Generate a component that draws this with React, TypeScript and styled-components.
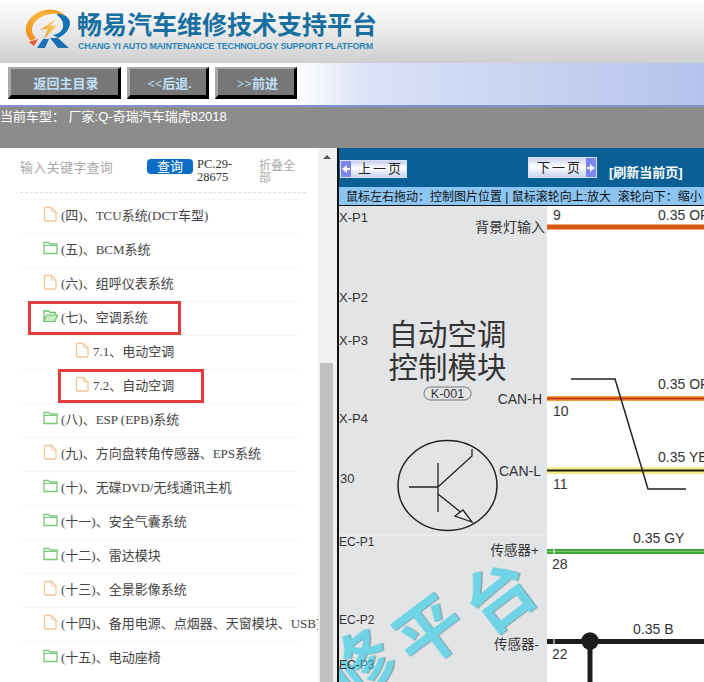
import React from "react";
import styled, { createGlobalStyle } from "styled-components";

const Global = createGlobalStyle`
  html, body {
    margin: 0;
    padding: 0;
    background: #fff;
  }
  body {
    width: 704px;
    height: 682px;
    overflow: hidden;
    font-family: "Liberation Sans", "Noto Sans CJK SC", sans-serif;
  }
`;

const Page = styled.div`
  width: 704px;
  height: 682px;
  display: flex;
  flex-direction: column;
  overflow: hidden;
`;

const Banner = styled.div`
  height: 63px;
  flex: none;
  display: flex;
  align-items: flex-start;
  gap: 6px;
  padding: 8px 0 0 25px;
  box-sizing: border-box;
  background: linear-gradient(#fdfdfd, #f4f4f4 30%, #cfcfcf);
`;

const BrandText = styled.div`
  display: flex;
  flex-direction: column;
  padding-top: 4px;
`;

const BrandTitle = styled.div`
  font-size: 25px;
  line-height: 26px;
  font-weight: 700;
  color: #17709f;
  white-space: nowrap;
`;

const BrandSub = styled.div`
  font-size: 9px;
  line-height: 11px;
  margin-top: 3px;
  margin-left: 1px;
  font-weight: 700;
  letter-spacing: -0.17px;
  color: #2a86b8;
  white-space: nowrap;
`;

const Toolbar = styled.div`
  height: 44px;
  flex: none;
  display: flex;
  align-items: flex-start;
  gap: 6px;
  padding: 4px 0 0 8px;
  box-sizing: border-box;
  background: linear-gradient(90deg, #fff 42%, #dbe2f7 52%, #b4c3ec);
  border-bottom: 2px solid #7d92cf;
`;

const NavButton = styled.button<{ $w: number }>`
  width: ${(p) => p.$w}px;
  height: 32px;
  padding: 0 0 0 3px;
  box-sizing: border-box;
  border-style: solid;
  border-width: 2px 3px 4px 3px;
  border-color: #a8a8a8 #000 #000 #a8a8a8;
  background: #777;
  color: #bfe0f7;
  font-family: "Liberation Serif", "Noto Sans CJK SC", serif;
  font-size: 13px;
  font-weight: 700;
`;

const ModelBar = styled.div`
  height: 41px;
  flex: none;
  background: #8c8c8c;
  color: #fff;
  font-size: 13px;
  line-height: 19px;
`;

const Body = styled.div`
  flex: 1;
  min-height: 0;
  display: flex;
`;

const Sidebar = styled.div`
  width: 337px;
  flex: none;
  display: flex;
  background: #fff;
  overflow: hidden;
`;

const SideContent = styled.div`
  width: 318px;
  flex: none;
  overflow: hidden;
`;

const SearchRow = styled.div`
  width: 286px;
  height: 45px;
  margin-left: 20px;
  display: flex;
  align-items: flex-start;
  box-sizing: border-box;
  padding-top: 10px;
  border-bottom: 1px dashed #ddd;
`;

const SearchHint = styled.div`
  width: 127px;
  flex: none;
  padding-top: 2px;
  font-size: 13px;
  line-height: 16px;
  letter-spacing: 0.3px;
  color: #aaa;
`;

const SearchButton = styled.div`
  width: 46px;
  height: 15px;
  margin-top: 1px;
  flex: none;
  border-radius: 4px;
  background: #0a6cc4;
  color: #fff;
  font-size: 13px;
  line-height: 15px;
  text-align: center;
`;

const CodeText = styled.div`
  width: 62px;
  flex: none;
  margin-left: 4px;
  font-family: "Liberation Serif", serif;
  font-size: 12.5px;
  line-height: 13px;
  color: #333;
`;

const CollapseText = styled.div`
  width: 37px;
  flex: none;
  margin-top: 2px;
  font-size: 12px;
  line-height: 12px;
  color: #aaa;
`;

const TreeList = styled.div`
  display: flex;
  flex-direction: column;
  margin-top: 6px;
`;

const Row = styled.div<{ $indent: number }>`
  position: relative;
  height: 34px;
  width: 279px;
  margin-left: 20px;
  box-sizing: border-box;
  display: flex;
  align-items: center;
  gap: 3px;
  padding: 0 0 5px ${(p) => p.$indent}px;
  border-top: 1px solid #f5f5f5;
  font-family: "Liberation Serif", "Noto Sans CJK SC", serif;
  font-size: 13px;
  color: #444;
  white-space: nowrap;
`;

const RedBox = styled.div<{ $left: number; $w: number }>`
  position: absolute;
  left: ${(p) => p.$left}px;
  top: -1px;
  width: ${(p) => p.$w}px;
  height: 34px;
  box-sizing: border-box;
  border: 3px solid #e23d3d;
`;

const Scrollbar = styled.div`
  width: 17px;
  flex: none;
  background: #f1f1f1;
  display: flex;
  flex-direction: column;
  align-items: center;
`;

const ScrollArrow = styled.div`
  width: 0;
  height: 0;
  margin-top: 7px;
  border-left: 4px solid transparent;
  border-right: 4px solid transparent;
  border-bottom: 4px solid #555;
`;

const ScrollThumb = styled.div`
  width: 13px;
  flex: 1;
  margin-top: 204px;
  background: #c1c1c1;
`;

const ScrollGutter = styled.div`
  width: 2px;
  flex: none;
  background: #f1f1f1;
`;

const Viewer = styled.div`
  flex: 1;
  min-width: 0;
  display: flex;
  flex-direction: column;
  border-left: 2px solid #111;
  overflow: hidden;
`;

const PageBar = styled.div`
  height: 39px;
  flex: none;
  display: flex;
  align-items: flex-start;
  background: #0a5f96;
  white-space: nowrap;
`;

const PageButton = styled.div<{ $ml: number; $mt: number; $w: number; $h: number; $rev?: boolean }>`
  width: ${(p) => p.$w}px;
  height: ${(p) => p.$h}px;
  margin: ${(p) => p.$mt}px 0 0 ${(p) => p.$ml}px;
  flex: none;
  box-sizing: border-box;
  display: flex;
  flex-direction: ${(p) => (p.$rev ? "row-reverse" : "row")};
  align-items: center;
  border: 1px solid #d9e2f7;
  background: linear-gradient(#c7d0f0, #fff 45%, #c9d3f2);
  font-size: 13px;
  color: #222;
`;

const PageArrow = styled.div`
  width: 10px;
  align-self: stretch;
  flex: none;
  display: flex;
  align-items: center;
  justify-content: center;
  background: #7a86ee;
`;

const PageLabel = styled.div`
  flex: 1;
  padding: 0 0 3px 4px;
  text-align: center;
  letter-spacing: 2px;
`;

const RefreshLink = styled.div`
  margin: 17px 0 0 12px;
  font-size: 13px;
  line-height: 16px;
  font-weight: 700;
  color: #fff;
`;

const HelpBar = styled.div`
  height: 19px;
  flex: none;
  box-sizing: border-box;
  padding: 1px 0 0 7px;
  background: #8cc5f2;
  border-bottom: 1px solid #111;
  font-size: 12px;
  line-height: 18px;
  color: #111;
  white-space: nowrap;
`;

const Sheet = styled.div`
  flex: 1;
  min-height: 0;
  overflow: hidden;
`;

const DiagramSvg = styled.svg`
  display: block;
  font-family: "Liberation Sans", "Noto Sans CJK SC", sans-serif;
`;

const WatermarkText = styled.text`
  font-size: 68px;
  font-weight: 700;
  fill: #6fd4e6;
  text-anchor: middle;
  filter: drop-shadow(1.5px 1.5px 0 #8b9ea3);
`;

const tree: { label: string; kind: "file" | "folder" | "open"; indent: number; box?: [number, number] }[] = [
  { label: "(四)、TCU系统(DCT车型)", kind: "file", indent: 23 },
  { label: "(五)、BCM系统", kind: "folder", indent: 23 },
  { label: "(六)、组呼仪表系统", kind: "file", indent: 23 },
  { label: "(七)、空调系统", kind: "open", indent: 23, box: [8, 153] },
  { label: "7.1、电动空调", kind: "file", indent: 55 },
  { label: "7.2、自动空调", kind: "file", indent: 55, box: [38, 146] },
  { label: "(八)、ESP (EPB)系统", kind: "folder", indent: 23 },
  { label: "(九)、方向盘转角传感器、EPS系统", kind: "file", indent: 23 },
  { label: "(十)、无碟DVD/无线通讯主机", kind: "folder", indent: 23 },
  { label: "(十一)、安全气囊系统", kind: "folder", indent: 23 },
  { label: "(十二)、雷达模块", kind: "folder", indent: 23 },
  { label: "(十三)、全景影像系统", kind: "file", indent: 23 },
  { label: "(十四)、备用电源、点烟器、天窗模块、USB充电", kind: "file", indent: 23 },
  { label: "(十五)、电动座椅", kind: "folder", indent: 23 },
];

const watermark: { ch: string; x: number; y: number }[] = [
  { ch: "修", x: 360, y: 667 },
  { ch: "平", x: 430, y: 632 },
  { ch: "台", x: 500, y: 597 },
];

const IconSvg = styled.svg`
  flex: none;
`;

function TreeIcon({ kind }: { kind: "file" | "folder" | "open" }) {
  if (kind === "file") {
    return (
      <IconSvg width="15" height="16" viewBox="0 0 15 16" fill="none">
        <path d="M1.5 2.5a1 1 0 0 1 1-1h6l4.5 4.500v8a1 1 0 0 1-1 1h-9.500a1 1 0 0 1-1-1z" stroke="#f0c89c" strokeWidth="1.300" />
        <path d="M8.500 1.500v4.500h4.500" stroke="#f0c89c" strokeWidth="1" />
      </IconSvg>
    );
  }
  if (kind === "open") {
    return (
      <IconSvg width="15" height="14" viewBox="0 0 15 14" fill="none">
        <path d="M1 12.500v-10.500h4.500l1.500 1.500h5.500v2" stroke="#6ec06e" strokeWidth="1.300" />
        <path d="M1 12.500l2.500-6.500h11l-2.500 6.500z" fill="#c9ecc4" stroke="#6ec06e" strokeWidth="1.200" />
      </IconSvg>
    );
  }
  return (
    <IconSvg width="15" height="14" viewBox="0 0 15 14" fill="none">
      <path d="M1 12.500v-11h4.500l1.500 1.500h7v9.500z" stroke="#7cc67a" strokeWidth="1.300" />
      <path d="M1 4.500h13" stroke="#7cc67a" strokeWidth="1" />
    </IconSvg>
  );
}

function Logo() {
  return (
    <IconSvg width="46" height="44" viewBox="0 0 46 44">
      <defs>
        <linearGradient id="ring" x1="0" y1="1" x2="1" y2="0">
          <stop offset="0" stopColor="#f08a1c" />
          <stop offset="0.6" stopColor="#f6b73a" />
          <stop offset="1" stopColor="#f08a1c" />
        </linearGradient>
        <linearGradient id="bolt" x1="0" y1="1" x2="1" y2="0">
          <stop offset="0" stopColor="#f09020" />
          <stop offset="1" stopColor="#fbe07a" />
        </linearGradient>
      </defs>
      <path d="M33 4C38 6 45 9 45 15c0 6-5 12-12 15l-5-3c5-1 9-3 10-8 1-5-2-9-6-12z" fill="#1273b5" />
      <path d="M6 33C0 27-1 19 4 12 10 4 21 0 30 2c4 1 8 3 10 6-5-3-9-3-14-2C18 7 11 11 8 17c-2 5-1 9 3 13z" fill="url(#ring)" />
      <path d="M32 10L15 22l8-1-5 11 14-15-7 1z" fill="url(#bolt)" />
      <path d="M4 34l9-3-4 7z" fill="#e4572e" />
      <path d="M12 40l6-9h6l-4 9zM25 30l8 0 11 10H33z" fill="#1b6fb4" />
    </IconSvg>
  );
}

function Diagram() {
  return (
    <DiagramSvg width="365" height="476" viewBox="339 206 365 476">
      <rect x="339" y="206" width="208" height="476" fill="#e3e4e6" />
      <rect x="547" y="206" width="157" height="476" fill="#fff" />
      <path d="M339 535H547" stroke="#f0f1f2" />

      {watermark.map((w) => (
        <g key={w.ch} transform={`translate(${w.x} ${w.y}) rotate(-37)`}>
          <WatermarkText x="0" y="24">{w.ch}</WatermarkText>
        </g>
      ))}

      <g fontSize="13" fill="#333">
        <text x="339" y="222">X-P1</text>
        <text x="339" y="302">X-P2</text>
        <text x="339" y="345">X-P3</text>
        <text x="339" y="423">X-P4</text>
        <text x="340" y="483">30</text>
      </g>
      <g fontSize="12" fill="#333">
        <text x="339" y="546">EC-P1</text>
        <text x="339" y="624">EC-P2</text>
        <text x="339" y="669">
          EC-<tspan fill="#2a8ea6">P3</tspan>
        </text>
      </g>

      <g fill="#333" textAnchor="end">
        <text x="545" y="232" fontSize="14">背景灯输入</text>
        <text x="542" y="404" fontSize="14">CAN-H</text>
        <text x="541" y="476" fontSize="14">CAN-L</text>
        <text x="539" y="555" fontSize="13.500">传感器+</text>
        <text x="539" y="649" fontSize="13.500">传感器-</text>
      </g>

      <g fill="#333" fontSize="29.500" textAnchor="middle">
        <text x="447.500" y="345">自动空调</text>
        <text x="447.500" y="378">控制模块</text>
      </g>
      <rect x="424" y="387" width="47" height="13" rx="6.500" fill="none" stroke="#777" />
      <text x="447.500" y="398" fontSize="12.500" fill="#333" textAnchor="middle">K-001</text>

      <g fill="none" stroke="#222">
        <ellipse cx="447.500" cy="485.500" rx="49.500" ry="45" strokeWidth="1.500" />
        <path d="M438 463v49M409 487h29M438 487l34-31v-7M438 494l30 24" strokeWidth="1.300" />
        <path d="M455 516l8-6 9 12z" fill="#eee" strokeWidth="1.300" />
      </g>

      <g fontSize="14" fill="#333">
        <text x="553" y="220">9</text>
        <text x="658" y="220">0.35 OR</text>
        <text x="553" y="416">10</text>
        <text x="658" y="389">0.35 OR</text>
        <text x="553" y="489">11</text>
        <text x="658" y="462">0.35 YE</text>
        <text x="633" y="543">0.35 GY</text>
        <text x="552" y="569">28</text>
        <text x="633" y="634">0.35 B</text>
        <text x="552" y="659">22</text>
      </g>

      <rect x="547" y="224.500" width="157" height="5" fill="#d9560f" />
      <rect x="547" y="396" width="157" height="5" fill="#f0a030" />
      <rect x="547" y="397.500" width="157" height="2" fill="#c8361a" />
      <rect x="547" y="467" width="157" height="7" fill="#f3ec8c" />
      <rect x="547" y="469.500" width="157" height="2" fill="#221c0c" />
      <rect x="547" y="549" width="157" height="5" fill="#3fa535" />
      <rect x="547" y="551" width="157" height="1" fill="#7cc66f" />
      <path d="M547 641.500H704M590 641.500V682" stroke="#1c1c1c" strokeWidth="5" fill="none" />
      <circle cx="590" cy="641" r="8.700" fill="#1c1c1c" />
      <path d="M554 548v7M554 638v7" stroke="#fff" strokeWidth="1" />
      <path d="M571 379h44l33 110h38" fill="none" stroke="#222" strokeWidth="1.500" />
    </DiagramSvg>
  );
}

function ArrowGlyph({ right }: { right?: boolean }) {
  return (
    <svg width="8" height="8" viewBox="0 0 8 8">
      <path d={right ? "M0 3h3V0l5 4-5 4V5H0z" : "M8 3H5V0L0 4l5 4V5h3z"} fill="#fff" />
    </svg>
  );
}

export default function App() {
  return (
    <Page>
      <Global />
      <Banner>
        <Logo />
        <BrandText>
          <BrandTitle>畅易汽车维修技术支持平台</BrandTitle>
          <BrandSub>CHANG YI AUTO MAINTENANCE TECHNOLOGY SUPPORT PLATFORM</BrandSub>
        </BrandText>
      </Banner>
      <Toolbar>
        <NavButton $w={113}>返回主目录</NavButton>
        <NavButton $w={82}>&lt;&lt;后退.</NavButton>
        <NavButton $w={82}>&gt;&gt;前进</NavButton>
      </Toolbar>
      <ModelBar>当前车型： 厂家:Q-奇瑞汽车瑞虎82018</ModelBar>
      <Body>
        <Sidebar>
          <SideContent>
            <SearchRow>
              <SearchHint>输入关键字查询</SearchHint>
              <SearchButton>查询</SearchButton>
              <CodeText>PC.29-28675</CodeText>
              <CollapseText>折叠全部</CollapseText>
            </SearchRow>
            <TreeList>
              {tree.map((item) => (
                <Row key={item.label} $indent={item.indent}>
                  <TreeIcon kind={item.kind} />
                  {item.label}
                  {item.box && <RedBox $left={item.box[0]} $w={item.box[1]} />}
                </Row>
              ))}
            </TreeList>
          </SideContent>
          <Scrollbar>
            <ScrollArrow />
            <ScrollThumb />
          </Scrollbar>
          <ScrollGutter />
        </Sidebar>
        <Viewer>
          <PageBar>
            <PageButton $ml={1} $mt={12} $w={67} $h={18}>
              <PageArrow>
                <ArrowGlyph />
              </PageArrow>
              <PageLabel>上一页</PageLabel>
            </PageButton>
            <PageButton $ml={121} $mt={9} $w={69} $h={21} $rev>
              <PageArrow>
                <ArrowGlyph right />
              </PageArrow>
              <PageLabel>下一页</PageLabel>
            </PageButton>
            <RefreshLink>[刷新当前页]</RefreshLink>
          </PageBar>
          <HelpBar>鼠标左右拖动：控制图片位置 | 鼠标滚轮向上:放大&nbsp;&nbsp;滚轮向下：缩小</HelpBar>
          <Sheet>
            <Diagram />
          </Sheet>
        </Viewer>
      </Body>
    </Page>
  );
}
